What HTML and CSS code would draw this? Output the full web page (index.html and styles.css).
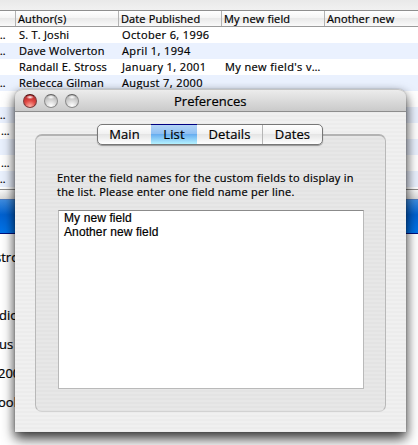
FILE: index.html
```
<!DOCTYPE html>
<html lang="en">
<head>
<meta charset="utf-8">
<title>Preferences</title>
<link rel="stylesheet" href="styles.css">
</head>
<body>
<main class="app">
  <div class="toolbar"></div>
  <div class="table">
    <div class="row head"><span></span><span>Author(s)</span><span>Date Published</span><span>My new field</span><span>Another new</span></div>
    <div class="row"><span class="more">…</span><span>S. T. Joshi</span><span class="loose">October 6, 1996</span><span></span><span></span></div>
    <div class="row"><span class="more">…</span><span class="looser">Dave Wolverton</span><span class="loose">April 1, 1994</span><span></span><span></span></div>
    <div class="row"><span></span><span>Randall E. Stross</span><span class="loose">January 1, 2001</span><span class="loose">My new field's v…</span><span></span></div>
    <div class="row"><span class="more">…</span><span>Rebecca Gilman</span><span class="loose">August 7, 2000</span><span></span><span></span></div>
    <div class="row"></div>
    <div class="row"><span class="more">…</span></div>
    <div class="row"><span class="more inset">…</span></div>
    <div class="row"></div>
    <div class="row"><span class="more inset">…</span></div>
    <div class="row"><span class="more">…</span></div>
  </div>
  <div class="splitter"></div>
  <div class="banner"></div>
  <div class="details">
    <p class="name">stross</p>
    <p class="blank"></p>
    <p>dio</p>
    <p>us</p>
    <p class="year">200</p>
    <p class="year">ook</p>
  </div>
</main>
<section class="window">
  <header class="titlebar">
    <i class="light close"></i><i class="light"></i><i class="light"></i>
    <h1>Preferences</h1>
  </header>
  <div class="content">
    <div class="group">
      <nav class="tabs">
        <span class="tab main">Main</span><span class="tab list">List</span><span class="tab info">Details</span><span class="tab dates">Dates</span>
      </nav>
      <p class="hint">Enter the field names for the custom fields to display in<br><span class="second">the list. Please enter one field name per line.</span></p>
      <div class="editor">My new field<br>Another new field</div>
    </div>
  </div>
</section>
</body>
</html>
```
FILE: styles.css
```
* { box-sizing: border-box; }
body {
  margin: 0;
  width: 418px;
  height: 445px;
  overflow: hidden;
  position: relative;
  background: #fff;
  color: #000;
  font: 500 11px/16px "Open Sans", "Noto Sans", sans-serif;
  -webkit-text-stroke: 0.2px #000;
}
.app { height: 445px; overflow: hidden; }
.toolbar { height: 10px; background: linear-gradient(#e9e9e9, #f1f1f1); }
.table { height: 179px; overflow: hidden; border-top: 1px solid #8e8e8e; }
.row {
  display: grid;
  grid-template-columns: 15px 103px 103px 103px 1fr;
  height: 16px;
  white-space: nowrap;
}
.row span { padding-left: 4px; letter-spacing: 0.22px; }
.row .loose { letter-spacing: 0.38px; }
.row .looser { letter-spacing: 0.3px; }
.row:nth-child(odd) { background: #eaf1fe; }
.row .more { padding-left: 0; margin-left: -3px; letter-spacing: 0; }
.row .inset { margin-left: 1px; }
.row.head { background: linear-gradient(#fff, #f3f3f3 50%, #e9e9e9 50%, #fafafa); border-bottom: 1px solid #9a9a9a; line-height: 15px; }
.row.head span { border-left: 1px solid #b3b3b3; padding-left: 2px; letter-spacing: 0.12px; }
.row.head span:first-child { border: 0; }
.splitter { height: 10px; border-top: 1px solid #8c8c8c; background: linear-gradient(#fafafa, #d9d9d9); }
.banner { height: 35px; border-top: 1px solid #4c7bc0; border-bottom: 1px solid #00107c; background: linear-gradient(#3d8bdf, #0061d0 45%, #0074ea); }
.details { padding-top: 9px; font-size: 13px; line-height: 29px; }
.details p { margin: 0 0 0 -1px; width: 16px; height: 29px; overflow: hidden; }
.details .name { margin-left: -5px; width: 20px; }
.details .year { margin-left: -2px; width: 17px; }
.window {
  position: absolute;
  left: 15px;
  top: 89px;
  width: 391px;
  height: 343px;
  border-radius: 8px 8px 0 0;
  background: repeating-linear-gradient(#f0f0f0 0 2px, #ececec 2px 4px);
  box-shadow: 0 0 1px rgba(0,0,0,.5), 0 3px 9px rgba(0,0,0,.3), 0 7px 13px rgba(0,0,0,.68);
}
.titlebar {
  height: 23px;
  display: grid;
  grid-template-columns: 14px 14px 14px 1fr;
  column-gap: 7px;
  align-items: center;
  padding-left: 8px;
  border-top: 1px solid #c4c4c4;
  border-bottom: 1px solid #8d8d8d;
  border-radius: 8px 8px 0 0;
  background: linear-gradient(#ececec, #cacaca);
}
.light {
  width: 14px;
  height: 14px;
  border: 1px solid #8c8c8c;
  border-top-color: #626262;
  border-radius: 50%;
  background: radial-gradient(ellipse 4px 2px at 50% 18%, #fff, transparent), radial-gradient(circle at 50% 90%, #fff, #cdcdcd 55%, #a6a6a6);
}
.close {
  border-color: #7c3c3c;
  border-top-color: #501010;
  background: radial-gradient(ellipse 4px 2px at 50% 18%, #fff, transparent), radial-gradient(circle at 50% 95%, #ffb4a8, #e04a45 45%, #a81c20);
}
.titlebar h1 { margin: 0 0 0 88px; font-size: 13px; font-weight: 500; line-height: 20px; letter-spacing: 0; }
.content { padding: 22px 20px 20px; height: 320px; }
.group {
  height: 278px;
  border: 1px solid #b8b8b8;
  border-top: 2px solid #b3b3b3;
  border-bottom-color: #d2d2d2;
  border-radius: 7px;
  padding: 0 22px;
  background: repeating-linear-gradient(#e7e7e7 0 2px, #e3e3e3 2px 4px);
}
.tabs {
  display: flex;
  width: 226px;
  height: 21px;
  margin: -12px 0 0 39px;
  border: 1px solid #777;
  border-radius: 5px;
  overflow: hidden;
  background: linear-gradient(#fff, #f1f1f1 48%, #e5e5e5 50%, #fff);
  box-shadow: 0 1px 1px rgba(0,0,0,.35);
  font-size: 13px;
  line-height: 19px;
}
.tab { text-align: center; letter-spacing: 0.1px; }
.main { width: 53px; }
.list { width: 46px; margin-top: -1px; border-top: 1px solid #000080; line-height: 19px; background: linear-gradient(#b4d4f6, #8dbff3 48%, #68aef0 50%, #b5f2ff); }
.info { width: 66px; border-right: 1px solid #b5b5b5; }
.dates { flex: 1; }
.tabs { overflow: visible; }
.hint { margin: 26px 0 0 -1px; line-height: 14px; white-space: nowrap; letter-spacing: 0.25px; }
.second { letter-spacing: 0.21px; }
.editor {
  width: 306px;
  height: 179px;
  margin: 11px 0 0;
  padding: 0 5px;
  border: 1px solid #b9b9b9;
  border-top-color: #8b8b8b;
  background: #fff;
  font: 12px/14px "Liberation Sans", Arial, sans-serif;
  letter-spacing: 0.1px;
}
```
